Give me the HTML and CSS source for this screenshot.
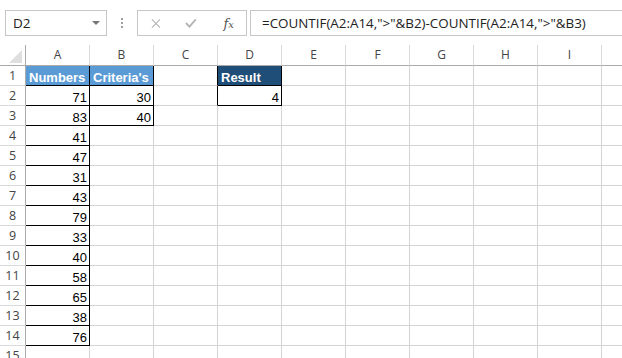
FILE: index.html
```html
<!DOCTYPE html>
<html lang="en">
<head>
    <meta charset="UTF-8">
    <meta name="viewport" content="width=device-width, initial-scale=1.0">
    <link rel="stylesheet" href="styles.css">
    <title>Book1 - Excel</title>
</head>

<body>
    <div class="toolbar">
        <div class="namebox">
            <span>D2</span>
            <span class="caret"></span>
        </div>
        <div class="grip"><i></i><i></i><i></i></div>
        <div class="fxbox">
            <svg width="11" height="11" viewBox="0 0 11 11"><path d="M1 1 L10 10 M10 1 L1 10" stroke="#b4b4b4" stroke-width="1.2" fill="none"/></svg>
            <svg width="13" height="10" viewBox="0 0 13 10"><path d="M1 5 L5 9 L12 1" stroke="#b4b4b4" stroke-width="2" fill="none"/></svg>
            <span class="fx">f<small>x</small></span>
        </div>
        <div class="formula">=COUNTIF(A2:A14,"&gt;"&amp;B2)-COUNTIF(A2:A14,"&gt;"&amp;B3)</div>
    </div>

    <div class="sheet">
        <div class="row head">
            <div class="rh corner"><span class="tri"></span></div>
            <div class="ch">A</div><div class="ch">B</div><div class="ch">C</div><div class="ch">D</div><div class="ch">E</div>
            <div class="ch">F</div><div class="ch">G</div><div class="ch">H</div><div class="ch">I</div><div class="ch"></div>
        </div>
        <div class="row">
            <div class="rh">1</div>
            <div class="c box light">Numbers</div><div class="c box light">Criteria's</div><div class="c edge"></div><div class="c box dark">Result</div>
            <div class="c"></div><div class="c"></div><div class="c"></div><div class="c"></div><div class="c"></div><div class="c"></div>
        </div>
        <div class="row">
            <div class="rh">2</div>
            <div class="c box num">71</div><div class="c box num">30</div><div class="c edge"></div><div class="c box num">4</div>
            <div class="c"></div><div class="c"></div><div class="c"></div><div class="c"></div><div class="c"></div><div class="c"></div>
        </div>
        <div class="row">
            <div class="rh">3</div>
            <div class="c box num">83</div><div class="c box num">40</div><div class="c"></div><div class="c"></div>
            <div class="c"></div><div class="c"></div><div class="c"></div><div class="c"></div><div class="c"></div><div class="c"></div>
        </div>
        <div class="row">
            <div class="rh">4</div>
            <div class="c box num">41</div><div class="c"></div><div class="c"></div><div class="c"></div>
            <div class="c"></div><div class="c"></div><div class="c"></div><div class="c"></div><div class="c"></div><div class="c"></div>
        </div>
        <div class="row">
            <div class="rh">5</div>
            <div class="c box num">47</div><div class="c"></div><div class="c"></div><div class="c"></div>
            <div class="c"></div><div class="c"></div><div class="c"></div><div class="c"></div><div class="c"></div><div class="c"></div>
        </div>
        <div class="row">
            <div class="rh">6</div>
            <div class="c box num">31</div><div class="c"></div><div class="c"></div><div class="c"></div>
            <div class="c"></div><div class="c"></div><div class="c"></div><div class="c"></div><div class="c"></div><div class="c"></div>
        </div>
        <div class="row">
            <div class="rh">7</div>
            <div class="c box num">43</div><div class="c"></div><div class="c"></div><div class="c"></div>
            <div class="c"></div><div class="c"></div><div class="c"></div><div class="c"></div><div class="c"></div><div class="c"></div>
        </div>
        <div class="row">
            <div class="rh">8</div>
            <div class="c box num">79</div><div class="c"></div><div class="c"></div><div class="c"></div>
            <div class="c"></div><div class="c"></div><div class="c"></div><div class="c"></div><div class="c"></div><div class="c"></div>
        </div>
        <div class="row">
            <div class="rh">9</div>
            <div class="c box num">33</div><div class="c"></div><div class="c"></div><div class="c"></div>
            <div class="c"></div><div class="c"></div><div class="c"></div><div class="c"></div><div class="c"></div><div class="c"></div>
        </div>
        <div class="row">
            <div class="rh">10</div>
            <div class="c box num">40</div><div class="c"></div><div class="c"></div><div class="c"></div>
            <div class="c"></div><div class="c"></div><div class="c"></div><div class="c"></div><div class="c"></div><div class="c"></div>
        </div>
        <div class="row">
            <div class="rh">11</div>
            <div class="c box num">58</div><div class="c"></div><div class="c"></div><div class="c"></div>
            <div class="c"></div><div class="c"></div><div class="c"></div><div class="c"></div><div class="c"></div><div class="c"></div>
        </div>
        <div class="row">
            <div class="rh">12</div>
            <div class="c box num">65</div><div class="c"></div><div class="c"></div><div class="c"></div>
            <div class="c"></div><div class="c"></div><div class="c"></div><div class="c"></div><div class="c"></div><div class="c"></div>
        </div>
        <div class="row">
            <div class="rh">13</div>
            <div class="c box num">38</div><div class="c"></div><div class="c"></div><div class="c"></div>
            <div class="c"></div><div class="c"></div><div class="c"></div><div class="c"></div><div class="c"></div><div class="c"></div>
        </div>
        <div class="row">
            <div class="rh">14</div>
            <div class="c box num">76</div><div class="c"></div><div class="c"></div><div class="c"></div>
            <div class="c"></div><div class="c"></div><div class="c"></div><div class="c"></div><div class="c"></div><div class="c"></div>
        </div>
        <div class="row">
            <div class="rh">15</div>
            <div class="c"></div><div class="c"></div><div class="c"></div><div class="c"></div>
            <div class="c"></div><div class="c"></div><div class="c"></div><div class="c"></div><div class="c"></div><div class="c"></div>
        </div>
    </div>
</body>
</html>
```

FILE: styles.css
```css
* {
    box-sizing: border-box;
}

body {
    margin: 0;
    background: #fff;
    overflow: hidden;
    width: 622px;
    height: 358px;
    font-family: "Open Sans", sans-serif;
}

/* top bar: name box + formula bar */

.toolbar {
    display: flex;
    align-items: flex-start;
    height: 45px;
    padding: 10px 0 0 5px;
}

.namebox {
    width: 102px;
    height: 26px;
    border: 1px solid #c6c6c6;
    display: flex;
    align-items: center;
    justify-content: space-between;
    padding: 0 6px 1px 7px;
    font-size: 13.5px;
    color: #222;
}

.caret {
    width: 0;
    height: 0;
    border-left: 4px solid transparent;
    border-right: 4px solid transparent;
    border-top: 4px solid #777;
    margin-top: 1px;
}

.grip {
    width: 30px;
    height: 26px;
    display: flex;
    flex-direction: column;
    align-items: center;
    justify-content: center;
    gap: 2px;
}

.grip i {
    width: 2px;
    height: 2px;
    background: #a0a0a0;
}

.fxbox {
    width: 110px;
    height: 26px;
    border: 1px solid #c6c6c6;
    display: flex;
    align-items: center;
    padding: 0 12px 0 13px;
    gap: 24px;
}

.fx {
    font-family: "DejaVu Serif", serif;
    font-style: italic;
    font-size: 13px;
    color: #555;
    margin-left: 3px;
}

.fx small {
    font-size: 10px;
}

.formula {
    flex: 1;
    height: 26px;
    margin-left: 3px;
    margin-right: -4px;
    border: 1px solid #c6c6c6;
    padding: 1px 0 0 11px;
    font-size: 13.4px;
    line-height: 22px;
    color: #222;
    white-space: nowrap;
}

/* grid */

.row {
    display: flex;
    height: 20px;
}

.row.head {
    height: 21px;
}

.rh {
    flex: none;
    width: 26px;
    border-right: 1px solid #ababab;
    border-bottom: 1px solid #d9d9d9;
    text-align: center;
    font-size: 12.5px;
    line-height: 19px;
    color: #444;
}

.ch {
    flex: none;
    width: 64px;
    border-right: 1px solid #dadada;
    border-bottom: 1px solid #ababab;
    text-align: center;
    font-size: 12px;
    line-height: 20px;
    color: #444;
}

.corner {
    position: relative;
    border-bottom: 1px solid #ababab;
}

.tri {
    position: absolute;
    right: 3px;
    bottom: 2px;
    width: 0;
    height: 0;
    border-left: 13px solid transparent;
    border-bottom: 13px solid #dfdfdf;
}

.c {
    flex: none;
    width: 64px;
    border-right: 1px solid #d4d4d4;
    border-bottom: 1px solid #d4d4d4;
    font-family: "Liberation Sans", Arial, sans-serif;
    font-size: 13px;
    line-height: 15px;
    padding: 4px 3px 0 3px;
    color: #000;
    white-space: nowrap;
    overflow: hidden;
}

.box {
    border-right-color: #000;
    border-bottom-color: #000;
}

.edge {
    border-right-color: #000;
}

.num {
    text-align: right;
    padding-right: 2px;
}

.light {
    background: #5b9bd5;
    color: #fff;
    font-weight: bold;
}

.dark {
    background: #1f4e78;
    color: #fff;
    font-weight: bold;
}
```
